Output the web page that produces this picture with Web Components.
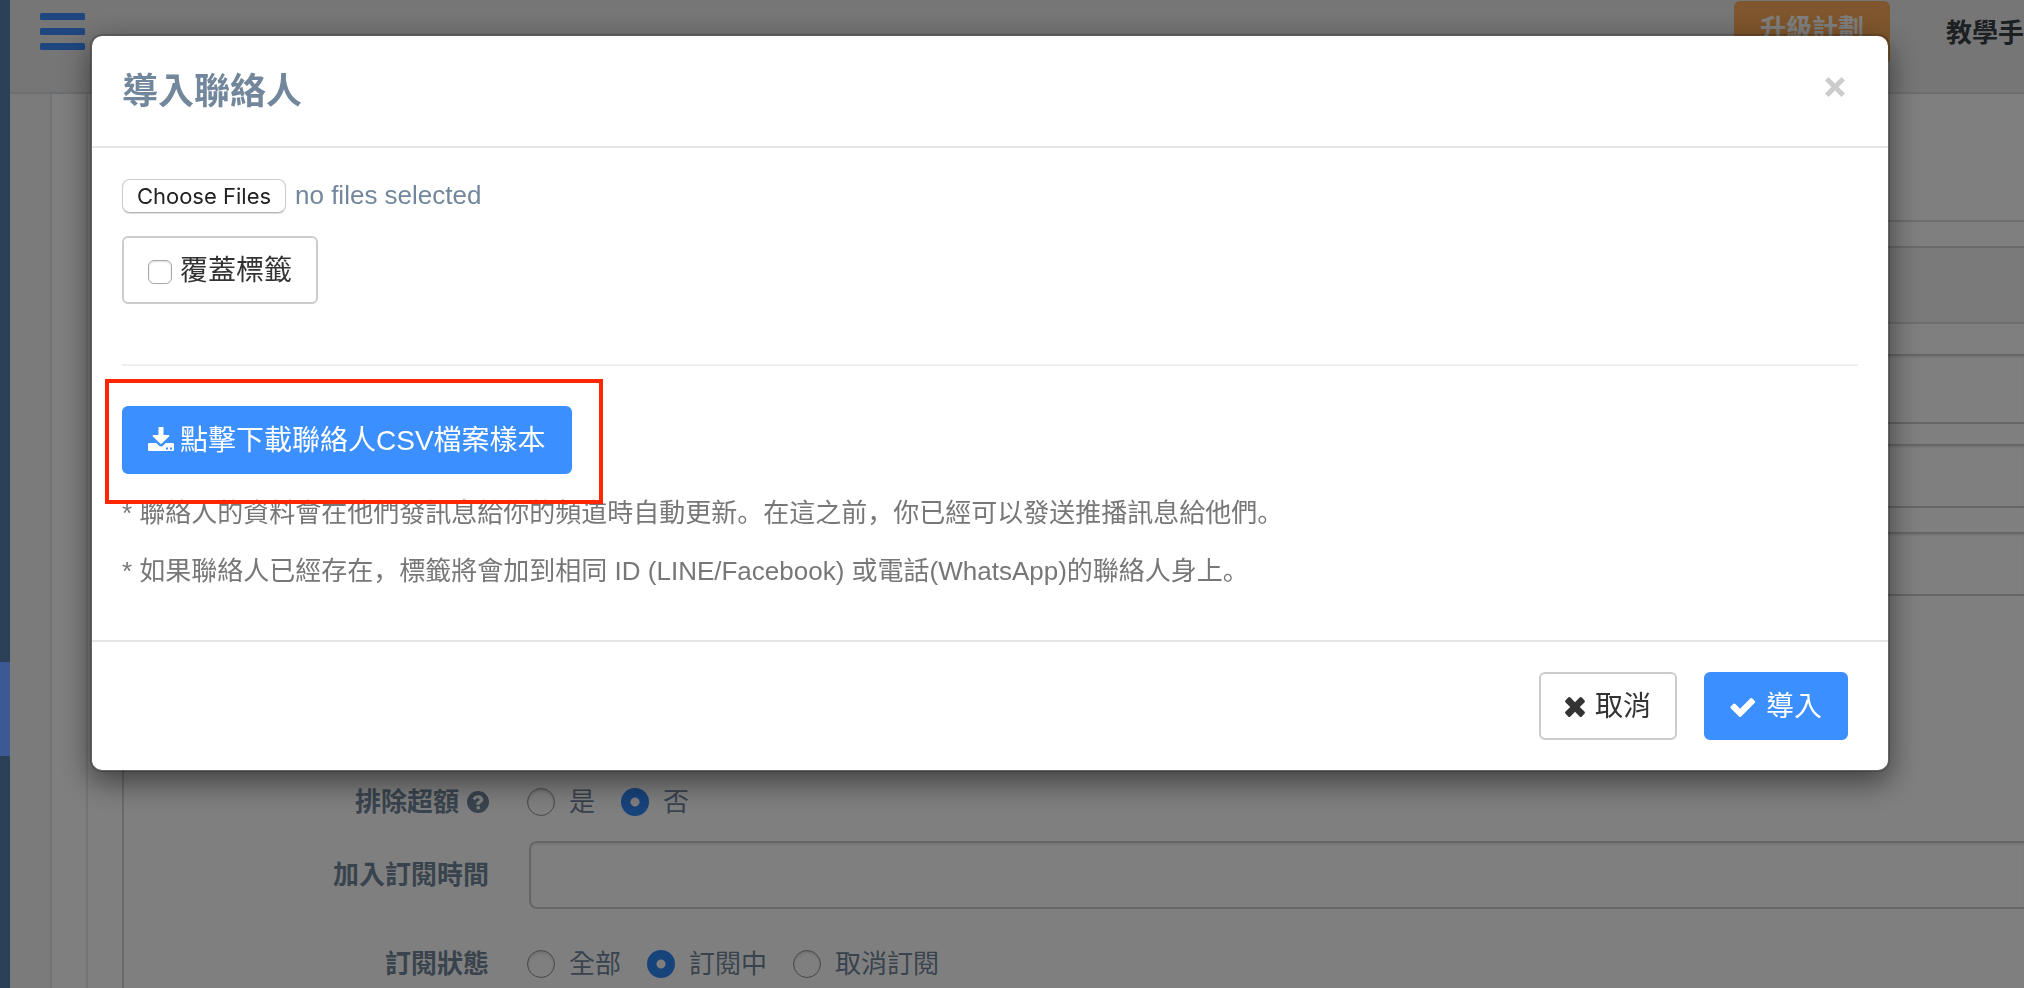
<!DOCTYPE html>
<html lang="zh-Hant">
<head>
<meta charset="utf-8">
<title>導入聯絡人</title>
<style>
  html, body { height: 100%; }
  body {
    margin: 0;
    overflow: hidden;
    background: #fff;
    color: #73879c;
    font: 26px/38px "Liberation Sans", "Noto Sans CJK SC", sans-serif;
  }
</style>
</head>
<body>
<app-page></app-page>
<script>
const define = (name, html) => {
  const template = document.createElement('template');
  template.innerHTML = html;
  customElements.define(name, class extends HTMLElement {
    constructor() {
      super();
      this.attachShadow({ mode: 'open' }).append(template.content.cloneNode(true));
    }
  });
};

const ICONS = {
  download: ['0 0 26 28', '<path fill-rule="evenodd" d="M10.500 0h5v8h5c.9 0 1.200.8.600 1.400l-7.300 7.200a1.100 1.100 0 0 1-1.600 0L4.900 9.400C4.300 8.800 4.600 8 5.500 8h5zM1.300 16h7l2.200 2.200a3.600 3.600 0 0 0 5 0l2.200-2.200h7c.7 0 1.300.6 1.300 1.300v5.400c0 .7-.6 1.300-1.300 1.300H1.300C.6 24 0 23.400 0 22.700v-5.400C0 16.600.6 16 1.300 16zM18 20.500v2h2v-2zM22 20.500v2h2v-2z"/>'],
  times: ['0 0 20 20', '<path d="M5.400.6a1.600 1.600 0 0 0-2.200 0L.6 3.200a1.600 1.600 0 0 0 0 2.200L5.200 10 .6 14.600a1.600 1.600 0 0 0 0 2.200l2.600 2.600a1.600 1.600 0 0 0 2.200 0L10 14.800l4.600 4.600a1.600 1.600 0 0 0 2.200 0l2.600-2.600a1.600 1.600 0 0 0 0-2.200L14.800 10l4.600-4.600a1.600 1.600 0 0 0 0-2.200L16.800.6a1.600 1.600 0 0 0-2.200 0L10 5.200z"/>'],
  close: ['0 0 20 20', '<path d="M3.500 0 10 6.500 16.500 0 20 3.500 13.500 10l6.500 6.500-3.500 3.500-6.500-6.500L3.500 20 0 16.500 6.500 10 0 3.500z"/>'],
  check: ['0 0 26 20', '<path d="M24.600 3.800a1.500 1.500 0 0 1 0 2.200L11.200 19.400a1.500 1.500 0 0 1-2.200 0L1 11.400a1.500 1.500 0 0 1 0-2.200L3.200 7a1.500 1.500 0 0 1 2.200 0l4.700 4.700L20.200 1.600a1.500 1.500 0 0 1 2.200 0z"/>'],
  question: ['0 0 24 24', '<path fill-rule="evenodd" d="M12 0a12 12 0 1 1 0 24 12 12 0 0 1 0-24zM10.500 16.500v3.500h3.500v-3.500zM6 8.300l2.600 1.900C9.600 8.900 10.400 8 11.700 8c1 0 2 .6 2 1.500 0 .8-.6 1.200-1.600 1.700-1.200.7-2 1.800-2 3v.8h3.500c0-.9.600-1.300 1.600-1.900 1.200-.7 2.600-1.700 2.600-3.800C17.800 6.400 15 4.500 12.100 4.500c-2.700 0-4.600 1.200-6.100 3.800z"/>'],
  bars: ['0 0 45 37', '<rect width="45" height="7" rx="1.500"/><rect y="15" width="45" height="7" rx="1.500"/><rect y="30" width="45" height="7" rx="1.500"/>']
};
customElements.define('app-icon', class extends HTMLElement {
  connectedCallback() {
    if (this.shadowRoot) return;
    const [box, shape] = ICONS[this.getAttribute('name')];
    this.attachShadow({ mode: 'open' }).innerHTML = `
      <style>:host { display: inline-flex; flex: none; } svg { display: block; width: 100%; height: 100%; fill: currentColor; }</style>
      <svg viewBox="${box}" aria-hidden="true">${shape}</svg>`;
  }
});

define('app-button', `
  <style>
    :host { display: inline-block; }
    button {
      display: flex; align-items: center; gap: var(--button-gap, 10px); box-sizing: border-box; height: 68px;
      padding: 2px 24px 0; border: 2px solid #ccc; border-radius: 6px; background: #fff;
      color: #333; font: inherit; font-size: 28px; line-height: 40px; white-space: nowrap;
    }
    :host([primary]) button { border-color: #3c8ffe; background: #3c8ffe; color: #fff; }
  </style>
  <button type="button"><slot></slot></button>`);

customElements.define('app-radio', class extends HTMLElement {
  connectedCallback() {
    if (this.shadowRoot) return;
    this.attachShadow({ mode: 'open' }).innerHTML = `
      <style>
        :host { display: block; }
        label { display: flex; align-items: center; gap: 14px; }
        input {
          appearance: none; box-sizing: border-box; width: 28px; height: 28px; margin: 0;
          border: 1px solid #909090; border-radius: 50%; background: #fff;
          box-shadow: inset 0 2px 3px #0002;
        }
        input:checked { border: 0; background: radial-gradient(circle, #fff 0 4px, #2f86f6 5px); box-shadow: none; }
      </style>
      <label><input type="radio"${this.hasAttribute('checked') ? ' checked' : ''}><span><slot></slot></span></label>`;
  }
});

define('form-row', `
  <style>
    :host { display: grid; grid-template-columns: 365px 1fr; column-gap: 40px; align-items: center; }
    .label { display: flex; justify-content: flex-end; align-items: center; gap: 8px; font-weight: 700; }
    .field { display: flex; align-items: center; gap: 26px; }
  </style>
  <div class="label"><slot name="label"></slot></div>
  <div class="field"><slot></slot></div>`);

customElements.define('text-field', class extends HTMLElement {
  connectedCallback() {
    if (this.shadowRoot) return;
    this.attachShadow({ mode: 'open' }).innerHTML = `
      <style>
        :host { display: block; flex: 1; }
        input {
          display: block; box-sizing: border-box; width: 100%; height: var(--field-height, 64px); margin: 0;
          border: 2px solid #ccc; border-right: 0; border-radius: 8px 0 0 8px; background: #fff;
          box-shadow: inset 0 2px 2px #00000013; font: inherit;
        }
      </style>
      <input type="text" aria-label="${this.getAttribute('label')}">`;
  }
});

define('side-bar', `
  <style>
    :host { display: block; position: relative; z-index: 3; background: #2a4157; }
    a { display: block; height: 94px; margin-top: 662px; background: #3c5996; }
  </style>
  <a href="#contacts" aria-label="聯絡人"></a>`);

define('top-bar', `
  <style>
    :host {
      display: flex; box-sizing: border-box; height: 94px; padding: 1px 0 0 30px;
      border-bottom: 2px solid #d9dee4; background: #ededed;
    }
    .menu { width: 45px; height: 37px; margin: 12px auto 0 0; padding: 0; border: 0; background: none; color: #3c8ffe; }
    app-icon { width: 45px; height: 37px; }
    .upgrade {
      width: 156px; height: 63px; padding: 0 0 8px; border: 0; border-radius: 6px;
      background: #ffad5b; color: #fff; font: inherit; font-weight: 700;
    }
    a { width: 78px; margin: 13px 0 0 56px; color: #3b4046; font-weight: 700; text-decoration: none; white-space: nowrap; }
  </style>
  <button class="menu" aria-label="選單"><app-icon name="bars"></app-icon></button>
  <button class="upgrade">升級計劃</button>
  <a href="#guide">教學手</a>`);

define('contacts-form', `
  <style>
    :host { display: block; background: #f7f7f7; padding-left: 40px; }
    .page { border-left: 2px solid #e6e9ed; background: #fff; padding-left: 34px; }
    .panel { border-left: 2px solid #e6e9ed; padding-left: 34px; }
    .title { height: 126px; border-bottom: 2px solid #ddd; }
    .box { margin-top: 24px; border: 2px solid #d5d5d5; border-right: 0; height: 900px; }
    .heading { height: 74px; border-bottom: 2px solid #ddd; background: #f5f5f5; }
    form { padding-top: 30px; }
    .tall { --field-height: 70px; margin-bottom: 20px; }
    .gap { margin-bottom: 24px; }
    .first { margin: 187px 0 20px; }
    .time { --field-height: 68px; margin-bottom: 36px; }
    app-icon { width: 22px; height: 22px; }
    .choices { column-gap: 38px; }
  </style>
  <div class="page"><div class="panel">
    <div class="title"></div>
    <div class="box">
      <div class="heading"></div>
      <form>
        <form-row class="tall"><text-field label="名稱"></text-field></form-row>
        <form-row class="gap"><text-field label="標籤"></text-field></form-row>
        <form-row><text-field label="頻道"></text-field></form-row>
        <form-row class="choices first">
          <span slot="label">排除超額</span><app-icon slot="label" name="question"></app-icon>
          <app-radio>是</app-radio><app-radio checked>否</app-radio>
        </form-row>
        <form-row class="time">
          <span slot="label">加入訂閱時間</span><text-field label="加入訂閱時間"></text-field>
        </form-row>
        <form-row class="choices">
          <span slot="label">訂閱狀態</span>
          <app-radio>全部</app-radio><app-radio checked>訂閱中</app-radio><app-radio>取消訂閱</app-radio>
        </form-row>
      </form>
    </div>
  </div></div>`);

define('import-dialog', `
  <style>
    :host {
      display: block; margin: 34px 134px 0 90px; border: 2px solid #0003; border-radius: 12px;
      background: #fff; background-clip: padding-box; box-shadow: 0 10px 30px #00000080;
    }
    header { display: flex; justify-content: space-between; align-items: flex-start; padding: 32px 42px 30px 30px; border-bottom: 2px solid #e5e5e5; }
    h2 { margin: 0; font-size: 36px; line-height: 48px; font-weight: 700; }
    .close { display: flex; margin: 9px 0 0; padding: 0; border: 0; background: none; color: #ccc; }
    .close app-icon { width: 22px; height: 20px; }
    main { padding: 30px; }
    .file { display: flex; align-items: center; gap: 9px; height: 34px; margin-bottom: 24px; }
    .file input { position: absolute; width: 1px; height: 1px; opacity: 0; }
    .file .pick {
      box-sizing: border-box; width: 164px; height: 34px; margin-top: 2px; border: 1px solid #ccc;
      border-bottom-color: #b4b4b4; border-radius: 8px; background: #fff; box-shadow: 0 1px 1px #0002;
      color: #222; font: 22px/32px Inter, sans-serif; text-align: center;
    }
    .overwrite {
      display: flex; align-items: center; gap: 8px; box-sizing: border-box; width: max-content; height: 68px;
      padding: 2px 24px 0; border: 2px solid #ccc; border-radius: 6px; color: #333; font-size: 28px; line-height: 40px;
    }
    .overwrite input {
      appearance: none; box-sizing: border-box; width: 24px; height: 24px; margin: 2px 0 0;
      border: 1px solid #a8a8a8; border-radius: 6px; background: #fff; box-shadow: inset 0 1px 2px #0002;
    }
    hr { margin: 60px 0 40px; border: 0; border-top: 2px solid #eee; }
    .download { position: relative; width: max-content; --button-gap: 6px; }
    .download app-button { display: block; }
    .download app-icon { width: 26px; height: 28px; }
    .mark { position: absolute; inset: -27px -31px -30px -17px; border: 4px solid #ff2600; }
    .notes { padding: 20px 0; color: #777; }
    p { margin: 0; }
    p + p { margin-top: 20px; }
    footer { display: flex; justify-content: flex-end; gap: 27px; padding: 30px 40px 30px 30px; border-top: 2px solid #e5e5e5; }
    footer app-icon { width: 20px; height: 20px; }
    footer [name=check] { width: 26px; }
  </style>
  <header>
    <h2>導入聯絡人</h2>
    <button class="close" aria-label="關閉"><app-icon name="close"></app-icon></button>
  </header>
  <main>
    <div class="file">
      <input id="files" type="file" multiple>
      <label class="pick" for="files">Choose Files</label>
      <span>no files selected</span>
    </div>
    <label class="overwrite"><input type="checkbox"><span>覆蓋標籤</span></label>
    <hr>
    <div class="download">
      <app-button primary><app-icon name="download"></app-icon><span>點擊下載聯絡人CSV檔案樣本</span></app-button>
      <div class="mark"></div>
    </div>
    <div class="notes" lang="zh-Hans">
      <p>* 聯絡人的資料會在他們發訊息給你的頻道時自動更新。在這之前，你已經可以發送推播訊息給他們。</p>
      <p>* 如果聯絡人已經存在，標籤將會加到相同 ID (LINE/Facebook) 或電話(WhatsApp)的聯絡人身上。</p>
    </div>
  </main>
  <footer>
    <app-button><app-icon name="times"></app-icon><span>取消</span></app-button>
    <app-button primary><app-icon name="check"></app-icon><span>導入</span></app-button>
  </footer>`);

define('app-page', `
  <style>
    :host { display: grid; grid-template-columns: 10px minmax(0, 1fr); height: 100vh; overflow: hidden; }
    .content { min-width: 0; }
    .backdrop { position: fixed; inset: 0; z-index: 2; overflow: hidden; background: #00000080; }
  </style>
  <side-bar></side-bar>
  <div class="content"><top-bar></top-bar><contacts-form></contacts-form></div>
  <div class="backdrop"><import-dialog role="dialog" aria-label="導入聯絡人"></import-dialog></div>`);
</script>
</body>
</html>
